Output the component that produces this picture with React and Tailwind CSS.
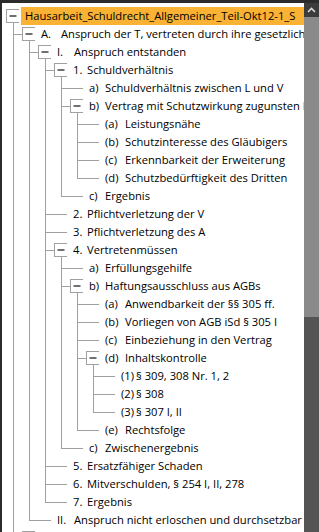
import React from 'react';

// outline tree of the Hausarbeit document
const rows = [
  { l: 0, exp: true, sel: true, text: 'Hausarbeit_Schuldrecht_Allgemeiner_Teil-Okt12-1_S' },
  { l: 1, exp: true, num: 'A.', text: 'Anspruch der T, vertreten durch ihre gesetzlichen Vertreter' },
  { l: 2, exp: true, num: 'I.', text: 'Anspruch entstanden' },
  { l: 3, exp: true, num: '1.', text: 'Schuldverhältnis' },
  { l: 4, num: 'a)', text: 'Schuldverhältnis zwischen L und V' },
  { l: 4, exp: true, num: 'b)', text: 'Vertrag mit Schutzwirkung zugunsten Dritter' },
  { l: 5, num: '(a)', text: 'Leistungsnähe' },
  { l: 5, num: '(b)', text: 'Schutzinteresse des Gläubigers' },
  { l: 5, num: '(c)', text: 'Erkennbarkeit der Erweiterung' },
  { l: 5, num: '(d)', text: 'Schutzbedürftigkeit des Dritten' },
  { l: 4, num: 'c)', text: 'Ergebnis' },
  { l: 3, num: '2.', text: 'Pflichtverletzung der V' },
  { l: 3, num: '3.', text: 'Pflichtverletzung des A' },
  { l: 3, exp: true, num: '4.', text: 'Vertretenmüssen' },
  { l: 4, num: 'a)', text: 'Erfüllungsgehilfe' },
  { l: 4, exp: true, num: 'b)', text: 'Haftungsausschluss aus AGBs' },
  { l: 5, num: '(a)', text: 'Anwendbarkeit der §§ 305 ff.' },
  { l: 5, num: '(b)', text: 'Vorliegen von AGB iSd § 305 I' },
  { l: 5, num: '(c)', text: 'Einbeziehung in den Vertrag' },
  { l: 5, exp: true, num: '(d)', text: 'Inhaltskontrolle' },
  { l: 6, num: '(1)', text: '§ 309, 308 Nr. 1, 2' },
  { l: 6, num: '(2)', text: '§ 308' },
  { l: 6, num: '(3)', text: '§ 307 I, II' },
  { l: 5, num: '(e)', text: 'Rechtsfolge' },
  { l: 4, num: 'c)', text: 'Zwischenergebnis' },
  { l: 3, num: '5.', text: 'Ersatzfähiger Schaden' },
  { l: 3, num: '6.', text: 'Mitverschulden, § 254 I, II, 278' },
  { l: 3, num: '7.', text: 'Ergebnis' },
  { l: 2, num: 'II.', text: 'Anspruch nicht erloschen und durchsetzbar' },
  // next top-level branch, only the expander peeks in at the bottom
  { l: 1, exp: true },
];

const numW = {
  1: 'w-[20px]',
  2: 'w-[17px]',
  3: 'w-[14px]',
  4: 'w-[16px]',
  5: 'w-[20px]',
  6: 'w-[15px]',
};

const LINE = '#a0a0a0';

// is there another node on this level before the branch closes?
function hasLater(i, lev) {
  for (let k = i + 1; k < rows.length; k++) {
    if (rows[k].l < lev) return false;
    if (rows[k].l === lev) return true;
  }
  return lev === 1;
}

function Cell({ children }) {
  return (
    <svg width="16" height="18" className="shrink-0 block">
      {children}
    </svg>
  );
}

function Row({ row, i }) {
  const guides = [];
  for (let j = 1; j < row.l; j++) {
    guides.push(
      <Cell key={j}>
        {hasLater(i, j) && <rect x="10" y="0" width="1" height="18" fill={LINE} />}
      </Cell>
    );
  }
  if (row.l > 0) {
    const more = hasLater(i, row.l);
    guides.push(
      <Cell key="p">
        <rect x="10" y="0" width="1" height={more ? 18 : 10} fill={LINE} />
        <rect x="10" y="9" width="6" height="1" fill={LINE} />
      </Cell>
    );
  }

  return (
    <div className="flex h-[18px] items-stretch whitespace-nowrap">
      {guides}
      <Cell>
        {row.exp ? (
          <>
            {row.l > 0 && <rect x="0" y="9" width="3" height="1" fill={LINE} />}
            <rect x="3.5" y="2.5" width="13" height="13" fill="#ffffff" stroke={LINE} />
            <rect x="6.5" y="8" width="7" height="2" fill="#6f6f6f" />
            <rect x="10" y="16" width="1" height="2" fill={LINE} />
          </>
        ) : (
          <rect x="0" y="9" width="16" height="1" fill={LINE} />
        )}
      </Cell>
      {row.text && (
        <div
          className={
            'ml-[2px] pl-[4px] flex items-center text-black ' +
            (row.sel ? 'bg-[#f9b233] pr-[40px]' : 'pr-[4px]')
          }
        >
          {row.num && <span className={'inline-block shrink-0 ' + numW[row.l]}>{row.num}</span>}
          <span>{row.text}</span>
        </div>
      )}
    </div>
  );
}

export default function App() {
  return (
    <div
      className="w-[319px] h-[532px] flex bg-[#2b2b2b] pt-[3px] pl-[2px] overflow-hidden text-[11.2px] leading-[18px]"
      style={{ fontFamily: '"Open Sans", "Noto Sans", sans-serif' }}
    >
      <div className="flex-1 bg-white overflow-hidden pt-[4px] pl-[1px]">
        {rows.map((row, i) => (
          <Row key={i} row={row} i={i} />
        ))}
      </div>
      <div className="w-[15px] flex flex-col bg-[#545454]">
        <div className="h-[14px] flex items-center justify-center bg-[#3c3c3c]">
          <svg width="9" height="6" viewBox="0 0 9 6">
            <path d="M1 5 L4.5 1.5 L8 5" stroke="#d8d8d8" strokeWidth="1.6" fill="none" />
          </svg>
        </div>
        <div className="h-[300px] bg-[#8a8a8a]" />
      </div>
    </div>
  );
}
